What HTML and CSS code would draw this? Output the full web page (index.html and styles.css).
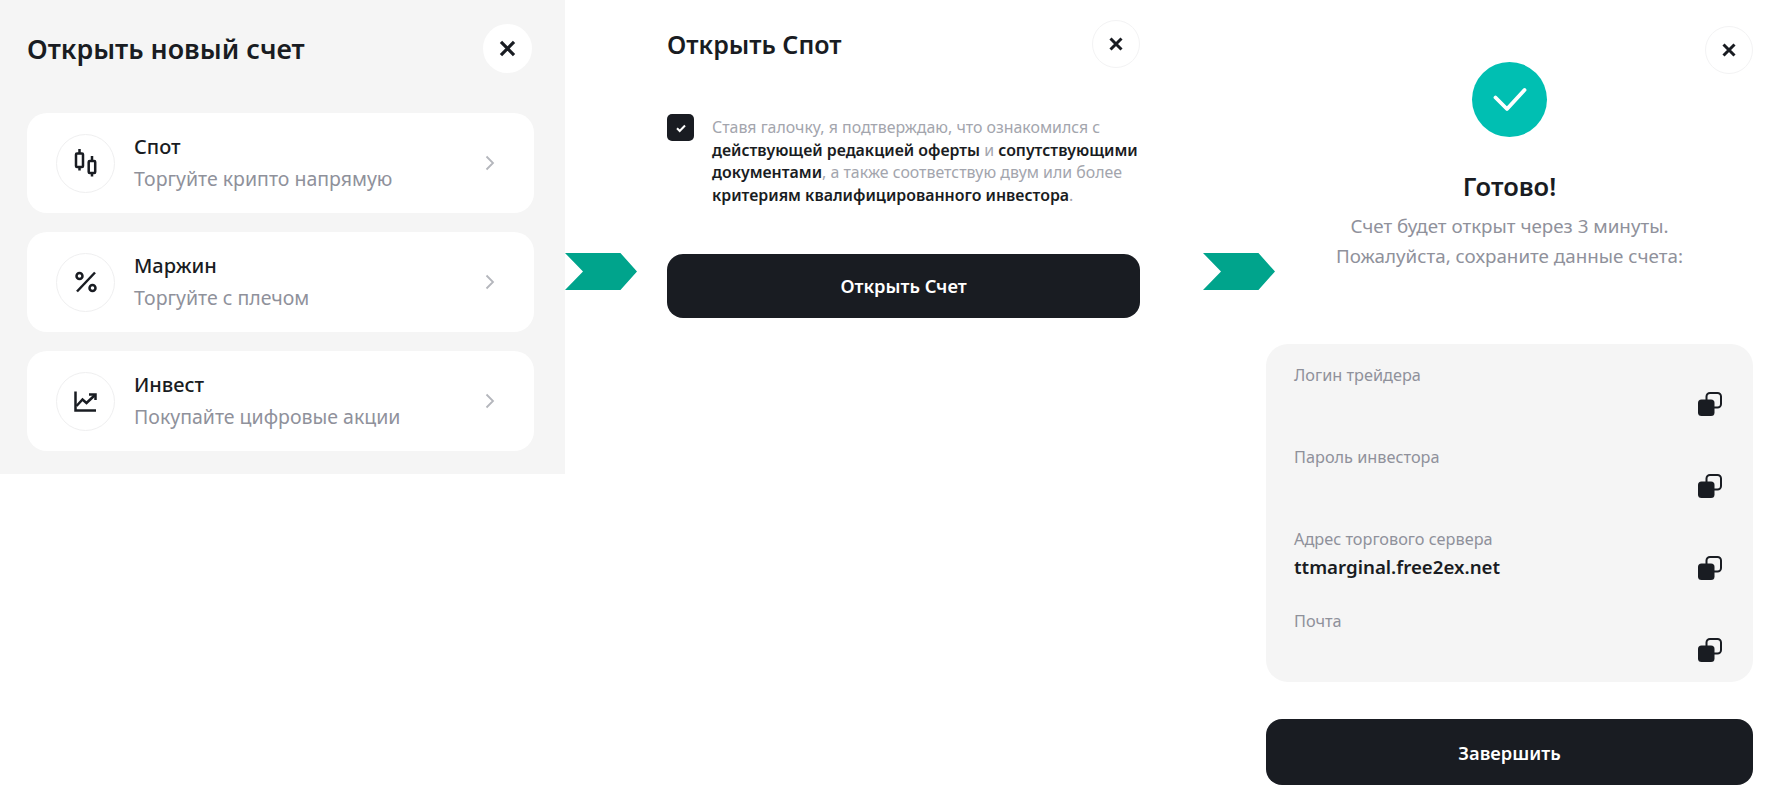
FILE: index.html
```html
<!DOCTYPE html>
<html lang="ru">
<head>
  <meta charset="utf-8">
  <title>Открыть счет</title>
  <link rel="stylesheet" href="styles.css">
</head>
<body>
  <div class="flow">

    <section class="panel">
      <div class="panel-head">
        <h1 class="panel-title">Открыть новый счет</h1>
        <button class="close close-big">
          <svg width="19" height="19" viewBox="0 0 16 16"><path d="M2.500 2.500l11 11M13.500 2.500l-11 11"/></svg>
        </button>
      </div>
      <div class="card">
        <span class="card-icon">
          <svg width="32" height="32" viewBox="0 0 32 32"><path d="M9.500 2v4.500M9.500 20v3.500M22 9v5M22 26v3.500"/><rect x="6" y="6.500" width="7" height="13.500" rx="1"/><rect x="18.700" y="14" width="6.500" height="12" rx="1"/></svg>
        </span>
        <div class="card-text">
          <div class="card-name">Спот</div>
          <div class="card-sub">Торгуйте крипто напрямую</div>
        </div>
        <svg class="chevron" width="10" height="16" viewBox="0 0 10 16"><path d="M1.500 1.500L8 8l-6.500 6.500"/></svg>
      </div>
      <div class="card">
        <span class="card-icon">
          <svg width="32" height="32" viewBox="0 0 32 32"><path d="M25 6.500L7 25.500"/><circle cx="9.500" cy="10" r="3"/><circle cx="22.500" cy="22" r="3"/></svg>
        </span>
        <div class="card-text">
          <div class="card-name">Маржин</div>
          <div class="card-sub">Торгуйте с плечом</div>
        </div>
        <svg class="chevron" width="10" height="16" viewBox="0 0 10 16"><path d="M1.500 1.500L8 8l-6.500 6.500"/></svg>
      </div>
      <div class="card">
        <span class="card-icon">
          <svg width="32" height="32" viewBox="0 0 32 32"><path d="M5.500 6.500v19H26"/><path d="M6.500 21l6-6.500 4 3.500 8.500-8"/><path d="M19 9.500h6.500V15"/></svg>
        </span>
        <div class="card-text">
          <div class="card-name">Инвест</div>
          <div class="card-sub">Покупайте цифровые акции</div>
        </div>
        <svg class="chevron" width="10" height="16" viewBox="0 0 10 16"><path d="M1.500 1.500L8 8l-6.500 6.500"/></svg>
      </div>
    </section>

    <div class="arrow arrow-first"></div>

    <section class="spot">
      <div class="spot-head">
        <h2 class="spot-title">Открыть Спот</h2>
        <button class="close close-line">
          <svg width="16" height="16" viewBox="0 0 16 16"><path d="M2.500 2.500l11 11M13.500 2.500l-11 11"/></svg>
        </button>
      </div>
      <div class="agree">
        <span class="checkbox">
          <svg width="12" height="12" viewBox="0 0 12 12"><path d="M2 6.300l2.700 2.700L10 3.500"/></svg>
        </span>
        <p class="agree-text">Ставя галочку, я подтверждаю, что ознакомился с <b>действующей редакцией оферты</b> и <b>сопутствующими</b> <b>документами</b>, а также соответствую двум или более <b>критериям квалифицированного инвестора</b>.</p>
      </div>
      <button class="main-btn spot-btn">Открыть Счет</button>
    </section>

    <div class="arrow arrow-second"></div>

    <section class="done">
      <button class="close close-line close-done">
        <svg width="16" height="16" viewBox="0 0 16 16"><path d="M2.500 2.500l11 11M13.500 2.500l-11 11"/></svg>
      </button>
      <div class="done-mark">
        <svg width="36" height="36" viewBox="0 0 36 36"><path d="M3.500 15.500L15 27 32.500 8"/></svg>
      </div>
      <h2 class="done-title">Готово!</h2>
      <p class="done-text">Счет будет открыт через 3 минуты.<br>Пожалуйста, сохраните данные счета:</p>

      <div class="data">
        <div class="data-row">
          <div class="data-text"><div class="data-label">Логин трейдера</div><div class="data-value"></div></div>
          <svg class="copy" width="24" height="24" viewBox="0 0 24 24"><rect x="8.500" y="1" width="14.500" height="14.500" rx="3.500"/><rect class="copy-front" x="0" y="7.500" width="16.500" height="16.500" rx="3.500"/></svg>
        </div>
        <div class="data-row">
          <div class="data-text"><div class="data-label">Пароль инвестора</div><div class="data-value"></div></div>
          <svg class="copy" width="24" height="24" viewBox="0 0 24 24"><rect x="8.500" y="1" width="14.500" height="14.500" rx="3.500"/><rect class="copy-front" x="0" y="7.500" width="16.500" height="16.500" rx="3.500"/></svg>
        </div>
        <div class="data-row">
          <div class="data-text"><div class="data-label">Адрес торгового сервера</div><div class="data-value">ttmarginal.free2ex.net</div></div>
          <svg class="copy" width="24" height="24" viewBox="0 0 24 24"><rect x="8.500" y="1" width="14.500" height="14.500" rx="3.500"/><rect class="copy-front" x="0" y="7.500" width="16.500" height="16.500" rx="3.500"/></svg>
        </div>
        <div class="data-row">
          <div class="data-text"><div class="data-label">Почта</div><div class="data-value"></div></div>
          <svg class="copy" width="24" height="24" viewBox="0 0 24 24"><rect x="8.500" y="1" width="14.500" height="14.500" rx="3.500"/><rect class="copy-front" x="0" y="7.500" width="16.500" height="16.500" rx="3.500"/></svg>
        </div>
      </div>

      <button class="main-btn done-btn">Завершить</button>
    </section>

  </div>
</body>
</html>
```

FILE: styles.css
```css
body {
  margin: 0;
  background-color: #ffffff;
  color: #191c22;
  font-family: "Noto Sans", "Open Sans", sans-serif;
}

h1, h2, p {
  margin: 0;
}

button {
  font-family: inherit;
  cursor: pointer;
}

.flow {
  display: flex;
  align-items: flex-start;
  height: 806px;
  overflow: hidden;
}

/* close buttons */
.close {
  display: flex;
  flex: none;
  align-items: center;
  justify-content: center;
  padding: 0;
  border: none;
  border-radius: 50%;
  background-color: #ffffff;
}

.close svg {
  fill: none;
  stroke: #191c22;
  stroke-width: 3;
}

.close-big {
  width: 49px;
  height: 49px;
}

.close-big svg {
  stroke-width: 2.700;
}

.close-line {
  width: 48px;
  height: 48px;
  border: 1px solid #f3f3f4;
}

/* first screen */
.panel {
  flex: none;
  box-sizing: border-box;
  width: 564.500px;
  height: 474px;
  padding: 24px 30.500px 0 27px;
  background-color: #f5f5f5;
}

.panel-head {
  display: flex;
  align-items: center;
  justify-content: space-between;
  margin-right: 2px;
  margin-bottom: 40px;
}

.panel-title {
  font-size: 26.800px;
  font-weight: 600;
}

.card {
  display: flex;
  align-items: center;
  height: 100px;
  margin-bottom: 19px;
  padding: 0 39px 0 29px;
  border-radius: 20px;
  background-color: #ffffff;
}

.card-icon {
  display: flex;
  flex: none;
  align-items: center;
  justify-content: center;
  box-sizing: border-box;
  width: 59px;
  height: 59px;
  margin-right: 19px;
  border: 1px solid #efeff0;
  border-radius: 50%;
}

.card-icon svg {
  fill: none;
  stroke: #191c22;
  stroke-width: 2.500;
}

.card-text {
  flex-grow: 1;
}

.card-name {
  font-size: 20px;
  font-weight: 500;
  line-height: 28px;
}

.card-sub {
  margin-top: 4px;
  color: #8f919b;
  font-size: 19.500px;
  line-height: 28px;
}

.chevron {
  fill: none;
  stroke: #b4b6bc;
  stroke-width: 1.800;
}

/* arrows between the screens */
.arrow {
  flex: none;
  width: 72px;
  height: 37px;
  margin-top: 253px;
  background-color: #00a48c;
  clip-path: polygon(0 0, 77% 0, 100% 50%, 77% 100%, 0 100%, 25% 50%);
}

.arrow-first {
  margin-left: 0.500px;
}

.arrow-second {
  margin-left: 63px;
  margin-right: -9px;
}

/* second screen */
.spot {
  flex: none;
  width: 473px;
  margin-left: 30px;
  padding-top: 20px;
}

.spot-head {
  display: flex;
  align-items: center;
  justify-content: space-between;
  margin-bottom: 46px;
}

.spot-title {
  font-size: 25px;
  font-weight: 600;
}

.agree {
  display: flex;
  margin-bottom: 47px;
}

.checkbox {
  display: flex;
  flex: none;
  align-items: center;
  justify-content: center;
  width: 27px;
  height: 27px;
  margin-right: 18px;
  border-radius: 5px;
  background-color: #191c22;
}

.checkbox svg {
  fill: none;
  stroke: #ffffff;
  stroke-width: 2;
}

.agree-text {
  padding-top: 2px;
  color: #a3a5ad;
  font-size: 15.900px;
  line-height: 22.700px;
}

.agree-text b {
  color: #191c22;
  font-weight: 600;
}

.main-btn {
  display: block;
  width: 100%;
  border: none;
  border-radius: 16px;
  background-color: #191c22;
  color: #ffffff;
  font-size: 18.300px;
  font-weight: 600;
}

.spot-btn {
  height: 64px;
}

/* third screen */
.done {
  position: relative;
  flex: none;
  width: 487px;
  padding-top: 62px;
  text-align: center;
}

.close-done {
  position: absolute;
  top: 26px;
  right: 0;
}

.done-mark {
  display: flex;
  align-items: center;
  justify-content: center;
  width: 75px;
  height: 75px;
  margin: 0 auto 31px;
  border-radius: 50%;
  background-color: #00bfb2;
}

.done-mark svg {
  fill: none;
  stroke: #ffffff;
  stroke-width: 3.800;
  stroke-linecap: round;
  stroke-linejoin: round;
}

.done-title {
  font-size: 25.500px;
  font-weight: 600;
  line-height: 36px;
}

.done-text {
  margin-top: 7px;
  color: #8f919b;
  font-size: 18.800px;
  line-height: 30px;
}

.data {
  box-sizing: border-box;
  height: 338px;
  margin-top: 73px;
  padding: 16px 31px 0 28px;
  border-radius: 22px;
  background-color: #f5f5f5;
  text-align: left;
}

.data-row {
  display: flex;
  align-items: flex-end;
  justify-content: space-between;
  height: 58px;
  margin-bottom: 24px;
}

.data-label {
  color: #8f919b;
  font-size: 16.300px;
  line-height: 26px;
}

.data-value {
  min-height: 30px;
  font-size: 18.700px;
  font-weight: 600;
  line-height: 30px;
}

.copy {
  flex: none;
  margin-bottom: 2px;
  fill: none;
  stroke: #191c22;
  stroke-width: 2;
}

.copy-front {
  fill: #191c22;
  stroke: none;
}

.done-btn {
  height: 66px;
  margin-top: 37px;
}
```
